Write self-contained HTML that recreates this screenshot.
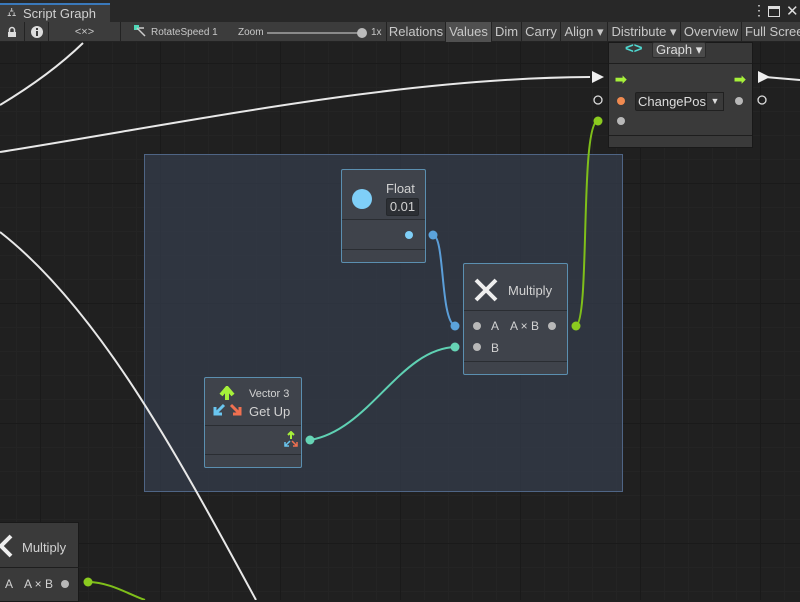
<!DOCTYPE html>
<html><head><style>
*{margin:0;padding:0;box-sizing:border-box}
body{width:800px;height:600px;overflow:hidden;background:#202020;font-family:"Liberation Sans",sans-serif;color:#d2d2d2;position:relative}
.a{position:absolute}
.grid{position:absolute;left:0;top:42px;width:800px;height:558px;
background-image:linear-gradient(90deg,#1a1a1a 1px,transparent 1px),linear-gradient(#1a1a1a 1px,transparent 1px),linear-gradient(90deg,#242424 1px,transparent 1px),linear-gradient(#242424 1px,transparent 1px);
background-size:120px 120px,120px 120px,24px 24px,24px 24px;background-position:40px 21px,40px 21px,40px 21px,40px 21px}
.tb{font-size:13px;color:#c8c8c8;top:22px;height:20px;line-height:20px;border-right:1px solid #232323;text-align:center}
.node{position:absolute;background:#3f434b;border:1px solid #5b8fb0;border-radius:2px}
.dot{position:absolute;width:8px;height:8px;border-radius:50%;background:#b8b8b8}
</style></head><body>
<div class="grid"></div>
<div class="a" style="left:144px;top:154px;width:479px;height:338px;background:rgba(52,60,75,0.75);border:1px solid #4f6585"></div>
<svg class="a" style="left:0;top:0" width="800" height="600">
<g fill="none" stroke="#e8e8e8" stroke-width="2">
<path d="M0 105 Q50 75 83 43"/>
<path d="M0 152 C200 120 400 78 590 77"/>
<path d="M765 77 L800 80"/>
<path d="M0 232 C100 310 180 460 256 600"/>
</g>
<polygon points="592,71 604,77 592,83" fill="#eee"/>
<polygon points="758,71 770,77 758,83" fill="#eee"/>
<circle cx="598" cy="100" r="4" fill="none" stroke="#ddd" stroke-width="1.3"/>
<circle cx="762" cy="100" r="4" fill="none" stroke="#ddd" stroke-width="1.3"/>
<path d="M576 326 C590 320 580 130 597 121" fill="none" stroke="#7fbf1a" stroke-width="2"/>
<circle cx="598" cy="121" r="4.5" fill="#8bcb1f"/>
<path d="M433 235 C445 236 440 320 455 326" fill="none" stroke="#5b9ed8" stroke-width="2"/>
<path d="M310 440 C370 430 400 348 456 347" fill="none" stroke="#5fd1b3" stroke-width="2"/>
<path d="M88 582 C110 582 130 595 145 600" fill="none" stroke="#7fbf1a" stroke-width="2"/>
<circle cx="433" cy="235" r="4.5" fill="#5ba3dc"/>
<circle cx="455" cy="326" r="4.5" fill="#5ba3dc"/>
<circle cx="455" cy="347" r="4.5" fill="#66d4b5"/>
<circle cx="310" cy="440" r="4.5" fill="#66d4b5"/>
<circle cx="576" cy="326" r="4.5" fill="#8bcb1f"/>
<circle cx="88" cy="582" r="4.5" fill="#8bcb1f"/>
</svg>

<!-- Top right node -->
<div class="a" style="left:608px;top:42px;width:145px;height:106px;background:#3a3a3a;border:1px solid #191919">
 <div class="a" style="left:0;top:0;width:143px;height:21px;background:#383838;border-bottom:1px solid #1e1e1e"></div>
 <div class="a" style="left:16px;top:-3px;color:#4fd8d0;font-size:15px;font-weight:bold">&lt;&gt;</div>
 <div class="a" style="left:43px;top:-1px;width:54px;height:16px;background:#4a4a4a;border:1px solid #2a2a2a;border-radius:2px;font-size:13px;line-height:14px;padding-left:3px;color:#ddd">Graph ▾</div>
 <div class="a" style="left:6px;top:28px;color:#a6f03a;font-size:14px;font-weight:bold">➡</div>
 <div class="a" style="left:125px;top:28px;color:#a6f03a;font-size:14px;font-weight:bold">➡</div>
 <div class="dot" style="left:8px;top:54px;background:#f08a50"></div>
 <div class="dot" style="left:8px;top:74px"></div>
 <div class="dot" style="left:126px;top:54px"></div>
 <div class="a" style="left:26px;top:49px;width:88px;height:19px;background:#2a2a2a;border:1px solid #202020;border-radius:2px;font-size:13px;line-height:17px;padding-left:2px;color:#ddd">ChangePos</div>
 <div class="a" style="left:97px;top:49px;width:18px;height:19px;background:#3a3a3a;border:1px solid #202020;color:#ddd;font-size:9px;line-height:17px;text-align:center">▼</div>
 <div class="a" style="left:0;top:92px;width:143px;height:1px;background:#1e1e1e"></div>
</div>

<!-- Float node -->
<div class="node" style="left:341px;top:169px;width:85px;height:94px">
 <div class="a" style="left:10px;top:19px;width:20px;height:20px;border-radius:50%;background:#7fcff8"></div>
 <div class="a" style="left:44px;top:11px;font-size:13px">Float</div>
 <div class="a" style="left:44px;top:28px;width:33px;height:18px;background:#2c2f34;border:1px solid #25282c;border-radius:2px;font-size:13px;line-height:16px;text-align:center">0.01</div>
 <div class="a" style="left:0;top:49px;width:83px;height:1px;background:#2a2d32"></div>
 <div class="dot" style="left:63px;top:61px;background:#7fcff8"></div>
 <div class="a" style="left:0;top:79px;width:83px;height:1px;background:#2a2d32"></div>
</div>

<!-- Multiply node -->
<div class="node" style="left:463px;top:263px;width:105px;height:112px">
 <svg class="a" style="left:10px;top:14px" width="24" height="24"><path d="M2 2L22 22M22 2L2 22" stroke="#eee" stroke-width="4"/></svg>
 <div class="a" style="left:44px;top:19px;font-size:13px">Multiply</div>
 <div class="a" style="left:0;top:46px;width:103px;height:1px;background:#2a2d32"></div>
 <div class="dot" style="left:9px;top:58px"></div>
 <div class="a" style="left:27px;top:55px;font-size:12px">A</div>
 <div class="a" style="left:46px;top:55px;font-size:12px">A × B</div>
 <div class="dot" style="left:84px;top:58px"></div>
 <div class="dot" style="left:9px;top:79px"></div>
 <div class="a" style="left:27px;top:77px;font-size:12px">B</div>
 <div class="a" style="left:0;top:97px;width:103px;height:1px;background:#2a2d32"></div>
</div>

<!-- Vector3 node -->
<div class="node" style="left:204px;top:377px;width:98px;height:91px">
 <svg class="a" style="left:7px;top:8px" width="32" height="34">
  <path d="M15 14V4M9 9L15 2L21 9" stroke="#a6f03a" stroke-width="4" fill="none"/>
  <path d="M12 19L3 28M3 21V28H10" stroke="#6ac6f0" stroke-width="3" fill="none"/>
  <path d="M19 19L28 28M28 21V28H21" stroke="#f07050" stroke-width="3" fill="none"/>
 </svg>
 <div class="a" style="left:44px;top:10px;font-size:11px">Vector 3</div>
 <div class="a" style="left:44px;top:26px;font-size:13px">Get Up</div>
 <div class="a" style="left:0;top:47px;width:96px;height:1px;background:#2a2d32"></div>
 <svg class="a" style="left:78px;top:53px" width="16" height="16">
  <path d="M8 8V2M5 4L8 1L11 4" stroke="#a6f03a" stroke-width="2" fill="none"/>
  <path d="M7 10L2 15M2 11V15H6" stroke="#6ac6f0" stroke-width="1.5" fill="none"/>
  <path d="M9 10L14 15M14 11V15H10" stroke="#f07050" stroke-width="1.5" fill="none"/>
 </svg>
 <div class="a" style="left:0;top:76px;width:96px;height:1px;background:#2a2d32"></div>
</div>

<!-- bottom-left multiply -->
<div class="a" style="left:-2px;top:522px;width:81px;height:80px;background:#3a3a3a;border:1px solid #191919">
 <svg class="a" style="left:0;top:11px" width="14" height="24"><path d="M12 2L2 12L12 22" stroke="#eee" stroke-width="4" fill="none"/></svg>
 <div class="a" style="left:23px;top:17px;font-size:13px">Multiply</div>
 <div class="a" style="left:0;top:44px;width:80px;height:1px;background:#1e1e1e"></div>
 <div class="a" style="left:6px;top:54px;font-size:12px">A</div>
 <div class="a" style="left:25px;top:54px;font-size:12px">A × B</div>
 <div class="dot" style="left:62px;top:57px"></div>
</div>

<!-- tab bar -->
<div class="a" style="left:0;top:0;width:800px;height:22px;background:#282828"></div>
<div class="a" style="left:0;top:3px;width:110px;height:19px;background:#3c3c3c;border-top:2px solid #3a79bb"></div>
<div class="a" style="left:7px;top:5px;font-size:12px;color:#ccc">⛼</div>
<div class="a" style="left:23px;top:6px;font-size:13px;color:#d0d0d0">Script Graph</div>
<div class="a" style="left:752px;top:2px;font-size:14px;color:#ddd">⋮</div>
<div class="a" style="left:768px;top:6px;width:12px;height:11px;border:1.5px solid #ddd;border-top-width:3px"></div>
<div class="a" style="left:786px;top:2px;font-size:15px;color:#ddd">✕</div>

<!-- toolbar -->
<div class="a" style="left:0;top:22px;width:800px;height:20px;background:#3c3c3c;border-bottom:1px solid #232323"></div>
<div class="a tb" style="left:0;width:25px"></div>
<svg class="a" style="left:7px;top:26px" width="10" height="12"><path d="M2.5 6V4a2.5 2.5 0 0 1 5 0v2" stroke="#ddd" stroke-width="1.5" fill="none"/><rect x="1" y="6" width="8" height="5" fill="#ddd"/></svg>
<div class="a tb" style="left:25px;width:24px"></div>
<svg class="a" style="left:31px;top:26px" width="12" height="12"><circle cx="6" cy="6" r="6" fill="#ddd"/><rect x="5" y="5" width="2" height="5" fill="#3c3c3c"/><rect x="5" y="2" width="2" height="2" fill="#3c3c3c"/></svg>
<div class="a tb" style="left:49px;width:72px;font-size:11px">&lt;×&gt;</div>
<div class="a tb" style="left:121px;width:266px"></div>
<svg class="a" style="left:134px;top:25px" width="12" height="12"><rect x="0" y="0" width="5" height="5" fill="#4fd8b8"/><path d="M3 3L11 11M5 3H10" stroke="#ccc" stroke-width="1.5"/></svg>
<div class="a" style="left:151px;top:27px;font-size:10px;color:#c8c8c8">RotateSpeed 1</div>
<div class="a" style="left:238px;top:27px;font-size:10px;color:#c8c8c8">Zoom</div>
<div class="a" style="left:267px;top:32px;width:96px;height:2px;background:#8a8a8a"></div>
<div class="a" style="left:357px;top:28px;width:10px;height:10px;border-radius:50%;background:#bbb"></div>
<div class="a" style="left:371px;top:27px;font-size:10px;color:#c8c8c8">1x</div>
<div class="a tb" style="left:387px;width:59px">Relations</div>
<div class="a tb" style="left:446px;width:46px;background:#505050">Values</div>
<div class="a tb" style="left:492px;width:30px">Dim</div>
<div class="a tb" style="left:522px;width:39px">Carry</div>
<div class="a tb" style="left:561px;width:47px">Align ▾</div>
<div class="a tb" style="left:608px;width:73px">Distribute ▾</div>
<div class="a tb" style="left:681px;width:61px">Overview</div>
<div class="a tb" style="left:742px;width:70px;text-align:left;padding-left:3px;white-space:nowrap">Full Screen</div>
</body></html>
